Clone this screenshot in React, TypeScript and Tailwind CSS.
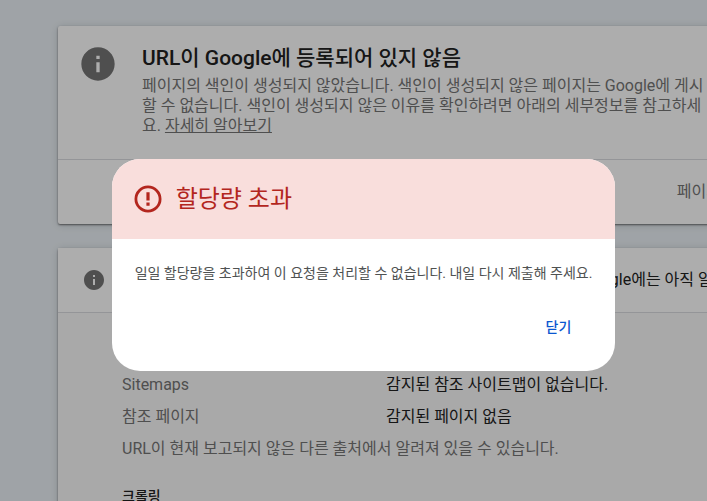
import { useState } from 'react'
import { MdInfo } from 'react-icons/md'

const discovery = [
  { label: 'Sitemaps', value: '감지된 참조 사이트맵이 없습니다.' },
  { label: '참조 페이지', value: '감지된 페이지 없음' },
]

function ErrorIcon() {
  return (
    <svg viewBox="0 0 32 32" className="size-8" fill="none" aria-hidden="true">
      <circle cx="16" cy="16" r="12.1" stroke="currentColor" strokeWidth="2.8" />
      <path d="M14.4 9.2h3.2v8.2h-3.2zM14.4 19.6h3.2v3.1h-3.2z" fill="currentColor" />
    </svg>
  )
}

function StatusCard() {
  return (
    <section className="-mr-6 rounded-xs bg-white shadow-[0_1px_2px_rgba(0,0,0,0.5),0_1px_8px_rgba(0,0,0,0.15)]">
      <div className="flex gap-6 border-b border-[#dadce0] pt-[18px] pr-6 pb-[23px] pl-5">
        <MdInfo className="size-10 shrink-0 text-[#757575]" />
        <div>
          <h1 className="text-[21px] leading-7 font-medium text-[#212121]">
            URL이 Google에 등록되어 있지 않음
          </h1>
          <p className="mt-1 text-base leading-5 text-[#757575]">
            페이지의 색인이 생성되지 않았습니다. 색인이 생성되지 않은 페이지는 Google에 게시할 수
            없습니다. 색인이 생성되지 않은 이유를 확인하려면 아래의 세부정보를 참고하세요.{' '}
            <a href="#details" className="underline">
              자세히 알아보기
            </a>
          </p>
        </div>
      </div>
      <div className="flex h-16 items-center justify-end pr-[10px] text-base text-[#757575]">
        페이지
      </div>
    </section>
  )
}

function IndexingCard() {
  return (
    <section
      id="details"
      className="-mr-6 rounded-xs bg-[#fafafa] shadow-[0_1px_2px_rgba(0,0,0,0.5),0_1px_8px_rgba(0,0,0,0.15)]"
    >
      <div className="flex h-[65px] items-center overflow-hidden border-b border-[#dadce0] bg-white pl-6 text-base whitespace-nowrap text-[#212121]">
        <MdInfo className="mr-4 size-6 shrink-0 text-[#757575]" />
        <h2 className="w-[200px] shrink-0">페이지 색인 생성</h2>
        <span>페이지의 색인이 생성되지 않음: URL이 Google에는 아직 알려지지 않음</span>
      </div>
      <div className="px-16 py-6">
        <h3 className="text-sm leading-8 font-medium text-[#212121]">탐색</h3>
        <dl className="grid grid-cols-[264px_1fr] text-base leading-8">
          {discovery.map((row) => (
            <div key={row.label} className="contents">
              <dt className="text-[#757575]">{row.label}</dt>
              <dd className="text-[#212121]">{row.value}</dd>
            </div>
          ))}
        </dl>
        <p className="text-base leading-8 text-[#757575]">
          URL이 현재 보고되지 않은 다른 출처에서 알려져 있을 수 있습니다.
        </p>
        <h3 className="mt-[15px] text-sm leading-8 font-medium text-[#212121]">크롤링</h3>
      </div>
    </section>
  )
}

function QuotaDialog({ onClose }: { onClose: () => void }) {
  return (
    <div className="fixed inset-0 flex items-start justify-center bg-black/32 pt-[159px] pl-5">
      <div
        role="alertdialog"
        aria-modal="true"
        aria-labelledby="quota-title"
        aria-describedby="quota-message"
        className="overflow-hidden rounded-[28px] bg-white"
      >
        <div className="flex h-20 items-center gap-3 bg-[#f9dedc] px-5 text-[#b3261e]">
          <ErrorIcon />
          <h2 id="quota-title" className="text-2xl">
            할당량 초과
          </h2>
        </div>
        <p id="quota-message" className="px-[23px] pt-6 text-sm text-[#4f5252]">
          일일 할당량을 초과하여 이 요청을 처리할 수 없습니다. 내일 다시 제출해 주세요.
        </p>
        <div className="flex justify-end px-6 pt-6 pb-6">
          <button
            type="button"
            onClick={onClose}
            className="h-10 rounded-full px-5 text-sm font-medium text-[#0b57d0]"
          >
            닫기
          </button>
        </div>
      </div>
    </div>
  )
}

export default function App() {
  const [open, setOpen] = useState(true)

  return (
    <div className="h-screen overflow-hidden bg-[#ebf1f6] font-['Roboto','Noto_Sans_CJK_KR',sans-serif]">
      <main className="flex flex-col gap-6 pt-[26px] pl-[58px]">
        <StatusCard />
        <IndexingCard />
      </main>
      {open && <QuotaDialog onClose={() => setOpen(false)} />}
    </div>
  )
}
